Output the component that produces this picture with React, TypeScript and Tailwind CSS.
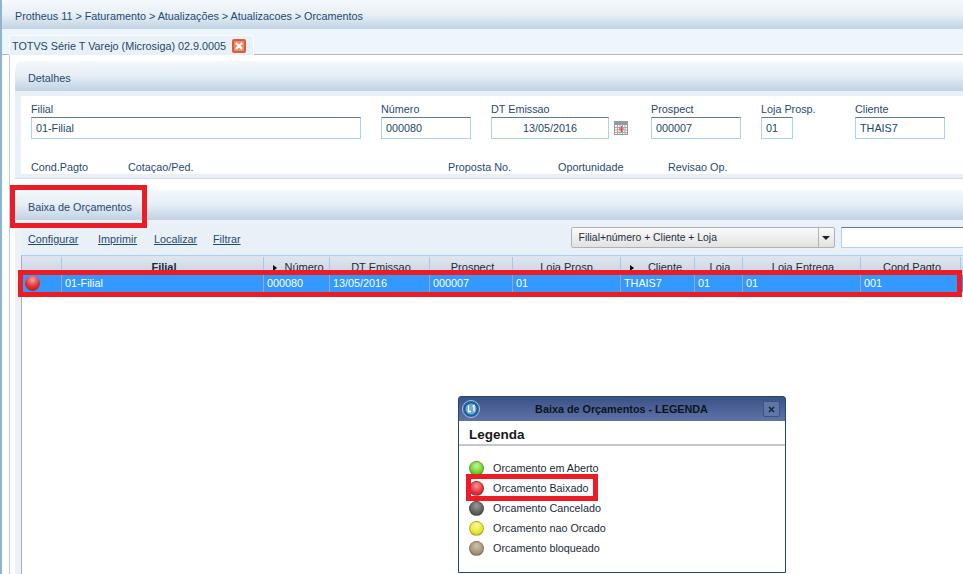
import React from 'react';

const font = 'font-["Liberation_Sans",Arial,sans-serif]';

const columns = [
  { label: '', value: '', width: 'w-[40px]' },
  { label: 'Filial', value: '01-Filial', width: 'w-[202px]', bold: true },
  { label: 'Número', value: '000080', width: 'w-[66px]', arrow: true },
  { label: 'DT Emissao', value: '13/05/2016', width: 'w-[100px]' },
  { label: 'Prospect', value: '000007', width: 'w-[83px]' },
  { label: 'Loja Prosp.', value: '01', width: 'w-[108px]' },
  { label: 'Cliente', value: 'THAIS7', width: 'w-[74px]', arrow: true },
  { label: 'Loja', value: '01', width: 'w-[48px]' },
  { label: 'Loja Entrega', value: '01', width: 'w-[118px]' },
  { label: 'Cond.Pagto', value: '001', width: 'w-[100px]' },
];

const legend = [
  { label: 'Orcamento em Aberto', color: 'bg-[radial-gradient(circle_at_50%_30%,#c4f59a,#6fd02c_60%,#4f9a25)]' },
  { label: 'Orcamento Baixado', color: 'bg-[radial-gradient(circle_at_50%_30%,#f59a9a,#e0303c_60%,#a82a30)]' },
  { label: 'Orcamento Cancelado', color: 'bg-[radial-gradient(circle_at_50%_30%,#9a9a9a,#5f5f5f_60%,#454545)]' },
  { label: 'Orcamento nao Orcado', color: 'bg-[radial-gradient(circle_at_50%_30%,#f8f8a0,#e6e62a_60%,#a8a830)]' },
  { label: 'Orcamento bloqueado', color: 'bg-[radial-gradient(circle_at_50%_30%,#cfc2a8,#a8957a_60%,#7d6e58)]' },
];

const Field = ({ label, value, width, center }: { label: string; value: string; width: string; center?: boolean }) => (
  <div className={width}>
    <div className="h-[21px] pt-[7px] text-[10.8px] leading-[12px] text-[#1f4a73]">{label}</div>
    <div className={`h-[22px] border border-[#a9d2f8] border-t-[#5d7b96] bg-white text-[10.8px] leading-[20px] text-[#24466a] ${center ? 'text-center' : 'pl-[4px]'}`}>
      {value}
    </div>
  </div>
);

const CalendarIcon = () => (
  <svg width="14" height="14" viewBox="0 0 14 14" className="ml-[5px] mt-[4px] shrink-0">
    <rect x="0.5" y="0.5" width="13" height="13" fill="#fafafa" stroke="#9a9a9a" />
    <rect x="1" y="1" width="12" height="3" fill="#8d9cab" />
    <path d="M1 6.5H13M1 9H13M1 11.5H13M3.5 4V13M6 4V13M8.5 4V13M11 4V13" stroke="#a8a8a8" strokeWidth="1" />
    <path d="M7.5 5V11M5 8H10" stroke="#f04848" strokeWidth="1.2" />
  </svg>
);

const SectionHeader = ({ title }: { title: string }) => (
  <div className="h-[30px] rounded-tl-[8px] bg-gradient-to-b from-[#f3f8fc] via-[#e6eef5] to-[#bfd2e3] pl-[13px] pt-[11px] text-[10.8px] leading-[12px] text-[#1f4a73]">
    {title}
  </div>
);

const Light = ({ color }: { color: string }) => (
  <span className={`block h-[15px] w-[15px] shrink-0 rounded-full border border-[#00000030] ${color}`} />
);

const App = () => {
  return (
    <div className={`relative flex h-[574px] w-[963px] overflow-hidden bg-white ${font}`}>
      <div className="w-[2px] shrink-0 bg-[#8fb4d2]" />
      <div className="flex min-w-0 flex-1 flex-col">
        <div className="h-[29px] shrink-0 rounded-tl-[6px] bg-gradient-to-b from-[#f4f9fd] via-[#e8f0f6] to-[#bfd2e4] pl-[13px] pt-[10px] text-[10.8px] leading-[12px] text-[#1f4a73]">
          Protheus 11 &gt; Faturamento &gt; Atualizações &gt; Atualizacoes &gt; Orcamentos
        </div>

        <div className="h-[26px] shrink-0 border-b border-[#b4b9bd] bg-[#eef6fd] pl-[7px] pt-[6px]">
          <div className="flex h-[20px] w-[245px] items-center rounded-t-[3px] border-x border-t border-[#fbfdff] bg-[#e9f1f8] pl-[2px] text-[10.8px] leading-[12px] text-[#24466a]">
            TOTVS Série T Varejo (Microsiga) 02.9.0005
            <span className="ml-[6px] flex h-[14px] w-[14px] items-center justify-center rounded-[2px] border-2 border-[#df5a3e] bg-[#ee9066]">
              <svg width="8" height="8" viewBox="0 0 8 8">
                <path d="M1 1L7 7M7 1L1 7" stroke="#fff" strokeWidth="2.2" />
              </svg>
            </span>
          </div>
        </div>

        <div className="ml-[7px] flex min-h-0 flex-1 flex-col border-l border-[#c4c9ce] pl-[5px] pt-[6px]">
          <SectionHeader title="Detalhes" />
          <div className="h-[88px] shrink-0 border-b border-[#d3dce6] bg-[#e9f0f7] pl-[6px] pt-[5px]">
            <div className="h-[78px] bg-white pl-[10px]">
              <div className="flex gap-5">
                <Field label="Filial" value="01-Filial" width="w-[330px]" />
                <Field label="Número" value="000080" width="w-[90px]" />
                <div className="flex w-[140px]">
                  <Field label="DT Emissao" value="13/05/2016" width="w-[118px]" center />
                  <div className="pt-[21px]">
                    <CalendarIcon />
                  </div>
                </div>
                <Field label="Prospect" value="000007" width="w-[90px]" />
                <Field label="Loja Prosp." value="01" width="w-[74px] [&>div:last-child]:w-[32px]" />
                <Field label="Cliente" value="THAIS7" width="w-[90px]" />
              </div>
              <div className="flex pt-[22px] text-[10.8px] leading-[12px] text-[#1f4a73]">
                <span className="w-[97px]">Cond.Pagto</span>
                <span className="w-[320px]">Cotaçao/Ped.</span>
                <span className="w-[110px]">Proposta No.</span>
                <span className="w-[110px]">Oportunidade</span>
                <span>Revisao Op.</span>
              </div>
            </div>
          </div>

          <div className="mt-[11px] shrink-0">
            <SectionHeader title="Baixa de Orçamentos" />
          </div>
          <div className="flex min-h-0 flex-1 flex-col bg-[#edf2f8] pl-[6px] pt-[5px]">
            <div className="flex h-[30px] shrink-0 items-start bg-[#e9f0f7] pl-[7px] pt-[2px]">
              <div className="flex pt-[6px] text-[10.8px] leading-[12px] text-[#1f4a73] underline">
                <span className="w-[70px]">Configurar</span>
                <span className="w-[56px]">Imprimir</span>
                <span className="w-[59px]">Localizar</span>
                <span>Filtrar</span>
              </div>
              <div className="ml-[330px] flex h-[21px] w-[264px] shrink-0 items-center rounded-[2px] border border-[#b2b2b2] bg-gradient-to-b from-[#fafafa] to-[#e2e2e2] pl-[7px] text-[10.4px] text-[#1f2f3f]">
                <span className="flex-1">Filial+número + Cliente + Loja</span>
                <span className="flex h-full w-[16px] items-center justify-center border-l border-[#b2b2b2]">
                  <span className="h-0 w-0 border-x-[4px] border-t-[4px] border-x-transparent border-t-[#222]" />
                </span>
              </div>
              <div className="ml-[6px] h-[21px] w-[130px] shrink-0 border border-[#a9d2f8] border-t-[#5d7b96] bg-white" />
            </div>
            <div className="min-h-0 flex-1 border-l border-t border-[#a7b0b9] border-t-[#a9d2f8] bg-white">
              <div className="flex h-[19px] border-t border-[#dbe3ec] bg-gradient-to-b from-[#dfe6ee] to-[#c9d4e2]">
                {columns.map((c, i) => (
                  <div
                    key={i}
                    className={`relative shrink-0 overflow-hidden border-r border-[#9fcbf7] pl-[3px] text-center text-[11px] leading-[20px] text-[#1c2a38] ${c.width} ${c.bold ? 'font-bold' : ''}`}
                  >
                    {c.arrow && (
                      <span className="absolute left-[9px] top-[8px] h-0 w-0 border-y-[3px] border-l-[4px] border-y-transparent border-l-black" />
                    )}
                    <span className={c.arrow ? 'pl-[12px]' : ''}>{c.label}</span>
                  </div>
                ))}
              </div>
              <div className="flex h-[17px] bg-[#3399ff]">
                {columns.map((c, i) => (
                  <div
                    key={i}
                    className={`flex shrink-0 items-center overflow-hidden border-r border-[#9aa7b4] pl-[3px] text-[10.8px] text-white ${c.width}`}
                  >
                    {i === 0 ? (
                      <span className="block h-[15px] w-[15px] rounded-full bg-[radial-gradient(circle_at_50%_25%,#f8a0a0,#e02a30_55%,#a81c20)]" />
                    ) : (
                      c.value
                    )}
                  </div>
                ))}
              </div>
            </div>
          </div>
        </div>
      </div>

      {/* red highlight marks drawn over the screen */}
      <div className="absolute left-[10px] top-[185px] h-[43px] w-[137px] border-[5px] border-[#ed1c24]" />
      <div className="absolute left-[18px] top-[270px] h-[27px] w-[944px] border-[5px] border-[#ed1c24]" />

      {/* legend dialog */}
      <div className="absolute left-[458px] top-[396px] h-[177px] w-[328px] rounded-t-[3px] border border-[#1f4a6e] bg-white">
        <div className="flex h-[24px] items-center bg-gradient-to-b from-[#3c5186] to-[#5e73a6] pl-[3px] pr-[5px]">
          <svg width="18" height="18" viewBox="0 0 18 18" className="shrink-0">
            <circle cx="9" cy="9" r="8.5" fill="#1f5f9e" stroke="#a9c4dc" />
            <circle cx="9" cy="9" r="5.5" fill="#6fa8d8" />
            <path d="M6.5 5.5V11.5H9M10.5 6.5L12 5.5V11.5" fill="none" stroke="#fff" strokeWidth="1.3" />
          </svg>
          <div className="flex-1 text-center text-[10.8px] font-bold text-[#0d1420]">Baixa de Orçamentos - LEGENDA</div>
          <span className="flex h-[16px] w-[17px] items-center justify-center rounded-[2px] border border-[#3f5284] bg-[#6076a9]">
            <svg width="7" height="7" viewBox="0 0 7 7">
              <path d="M1 1L6 6M6 1L1 6" stroke="#1c2738" strokeWidth="1.6" />
            </svg>
          </span>
        </div>
        <div className="h-[25px] border-b-[2px] border-[#c8c8c8] pl-[10px] pt-[6px] text-[13.5px] font-bold leading-[16px] text-[#1a1a1a]">
          Legenda
        </div>
        <div className="flex flex-col pl-[10px] pt-[12px]">
          {legend.map((l) => (
            <div key={l.label} className="flex h-[20px] items-center gap-[9px] text-[10.8px] text-[#1c2a38]">
              <Light color={l.color} />
              {l.label}
            </div>
          ))}
        </div>
      </div>
      <div className="absolute left-[466px] top-[474px] h-[27px] w-[132px] border-[5px] border-[#ed1c24]" />
    </div>
  );
};

export default App;
